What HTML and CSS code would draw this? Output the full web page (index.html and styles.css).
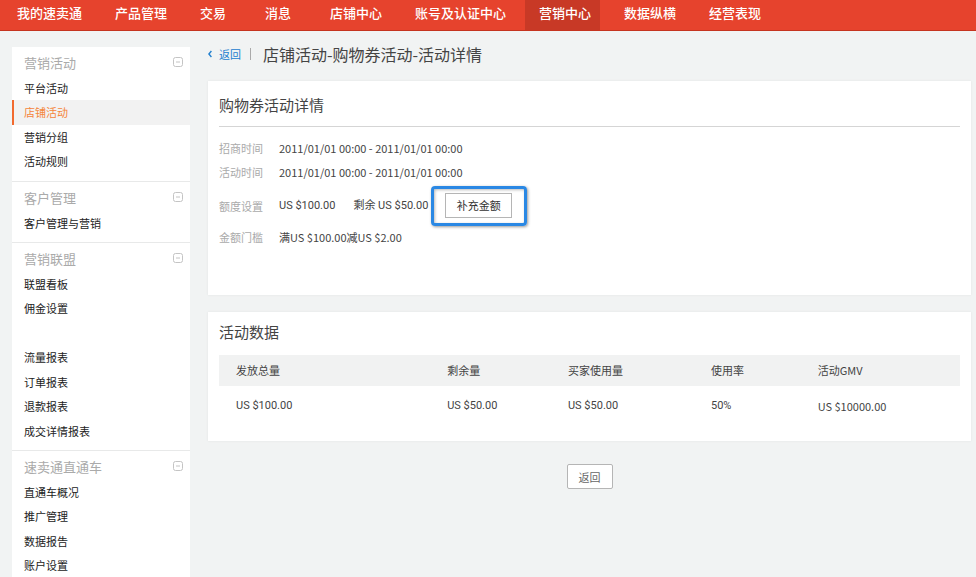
FILE: index.html
```html
<!DOCTYPE html>
<html lang="zh-CN">
<head>
    <meta charset="UTF-8">
    <meta name="viewport" content="width=device-width, initial-scale=1.0">
    <title>店铺活动-购物券活动-活动详情</title>
    <link rel="stylesheet" href="styles.css">
</head>
<body>

    <nav class="top-nav">
        <a href="#">我的速卖通</a>
        <a href="#">产品管理</a>
        <a href="#">交易</a>
        <a href="#">消息</a>
        <a href="#">店铺中心</a>
        <a href="#">账号及认证中心</a>
        <a href="#" class="active">营销中心</a>
        <a href="#">数据纵横</a>
        <a href="#">经营表现</a>
    </nav>

    <div class="page">
        <aside class="sidebar">
            <section class="menu-group">
                <div class="menu-head">
                    <h2>营销活动</h2>
                    <button class="toggle" aria-label="收起"><svg width="10" height="10" viewBox="0 0 10 10"><rect x="0.5" y="0.5" width="9" height="9" rx="2"/><path d="M3 5h4"/></svg></button>
                </div>
                <ul>
                    <li><a href="#">平台活动</a></li>
                    <li class="selected"><a href="#">店铺活动</a></li>
                    <li><a href="#">营销分组</a></li>
                    <li><a href="#">活动规则</a></li>
                </ul>
            </section>
            <section class="menu-group">
                <div class="menu-head">
                    <h2>客户管理</h2>
                    <button class="toggle" aria-label="收起"><svg width="10" height="10" viewBox="0 0 10 10"><rect x="0.5" y="0.5" width="9" height="9" rx="2"/><path d="M3 5h4"/></svg></button>
                </div>
                <ul>
                    <li><a href="#">客户管理与营销</a></li>
                </ul>
            </section>
            <section class="menu-group">
                <div class="menu-head">
                    <h2>营销联盟</h2>
                    <button class="toggle" aria-label="收起"><svg width="10" height="10" viewBox="0 0 10 10"><rect x="0.5" y="0.5" width="9" height="9" rx="2"/><path d="M3 5h4"/></svg></button>
                </div>
                <ul>
                    <li><a href="#">联盟看板</a></li>
                    <li><a href="#">佣金设置</a></li>
                    <li></li>
                    <li><a href="#">流量报表</a></li>
                    <li><a href="#">订单报表</a></li>
                    <li><a href="#">退款报表</a></li>
                    <li><a href="#">成交详情报表</a></li>
                </ul>
            </section>
            <section class="menu-group">
                <div class="menu-head">
                    <h2>速卖通直通车</h2>
                    <button class="toggle" aria-label="收起"><svg width="10" height="10" viewBox="0 0 10 10"><rect x="0.5" y="0.5" width="9" height="9" rx="2"/><path d="M3 5h4"/></svg></button>
                </div>
                <ul>
                    <li><a href="#">直通车概况</a></li>
                    <li><a href="#">推广管理</a></li>
                    <li><a href="#">数据报告</a></li>
                    <li><a href="#">账户设置</a></li>
                </ul>
            </section>
        </aside>

        <main class="content">
            <header class="title-bar">
                <a href="#" class="back-link"><svg width="4" height="8" viewBox="0 0 4 8"><path d="M3.4 1L0.9 4l2.5 3"/></svg>返回</a>
                <span class="divider"></span>
                <h1>店铺活动-购物券活动-活动详情</h1>
            </header>

            <section class="card detail">
                <h2>购物券活动详情</h2>
                <dl>
                    <div class="row">
                        <dt>招商时间</dt>
                        <dd>2011/01/01 00:00 - 2011/01/01 00:00</dd>
                    </div>
                    <div class="row">
                        <dt>活动时间</dt>
                        <dd>2011/01/01 00:00 - 2011/01/01 00:00</dd>
                    </div>
                    <div class="row quota">
                        <dt>额度设置</dt>
                        <dd>
                            <span>US $100.00</span>
                            <span class="remain">剩余 US $50.00</span>
                            <span class="highlight"><button class="btn add-button">补充金额</button></span>
                        </dd>
                    </div>
                    <div class="row">
                        <dt>金额门槛</dt>
                        <dd>满US $100.00减US $2.00</dd>
                    </div>
                </dl>
            </section>

            <section class="card data">
                <h2>活动数据</h2>
                <table>
                    <thead>
                        <tr>
                            <th class="col-total">发放总量</th>
                            <th class="col-left">剩余量</th>
                            <th class="col-used">买家使用量</th>
                            <th class="col-rate">使用率</th>
                            <th>活动GMV</th>
                        </tr>
                    </thead>
                    <tbody>
                        <tr>
                            <td>US $100.00</td>
                            <td>US $50.00</td>
                            <td>US $50.00</td>
                            <td>50%</td>
                            <td class="gmv">US $10000.00</td>
                        </tr>
                    </tbody>
                </table>
            </section>

            <div class="actions">
                <button class="btn return-button">返回</button>
            </div>
        </main>
    </div>

</body>
</html>
```

FILE: styles.css
```css
* {
    box-sizing: border-box;
}
body {
    margin: 0;
    background-color: #f1f3f3;
    color: #444;
    font-family: "Noto Sans CJK SC", sans-serif;
    font-size: 11px;
}
h1, h2, ul, dl, dd {
    margin: 0;
    padding: 0;
    font-weight: normal;
}
a {
    color: inherit;
    text-decoration: none;
}
button {
    padding: 0;
    font-family: inherit;
    cursor: pointer;
}

/* top navigation */
.top-nav {
    display: flex;
    gap: 10px;
    padding-left: 3px;
    background-color: #e6432d;
    border-bottom: 1px solid #c5341f;
}
.top-nav a {
    min-width: 55px;
    padding: 0 9px 4px 14px;
    color: #fff;
    font-size: 13px;
    font-weight: 500;
    line-height: 26px;
    white-space: nowrap;
}
.top-nav .active {
    background-color: #c83926;
}

.page {
    display: flex;
    gap: 18px;
    padding: 0 5px 0 12px;
}

/* sidebar */
.sidebar {
    flex: none;
    width: 178px;
    margin-top: 16px;
    background-color: #fff;
}
.menu-group {
    padding-bottom: 7px;
    border-bottom: 1px solid #e8e9e9;
}
.menu-head {
    display: flex;
    justify-content: space-between;
    align-items: center;
    height: 29px;
    padding: 0 7px 0 12px;
}
.menu-head h2 {
    padding-top: 2px;
    color: #aaa;
    font-size: 13px;
    line-height: 26px;
}
.toggle {
    display: flex;
    border: none;
    background: none;
}
.toggle svg {
    fill: none;
    stroke: #c4c4c4;
}
.sidebar ul {
    list-style: none;
}
.sidebar li {
    height: 24px;
    padding-left: 12px;
    color: #222;
    line-height: 24px;
}
.sidebar li:nth-child(even) {
    height: 25px;
}
.sidebar .selected {
    padding-left: 10px;
    border-left: 2px solid #f26a2e;
    background-color: #f2f2f2;
    color: #f5853b;
}

/* main column */
.content {
    flex: 1;
}
.title-bar {
    display: flex;
    align-items: center;
    height: 50px;
    padding-bottom: 4px;
}
.back-link {
    display: flex;
    align-items: center;
    gap: 7px;
    color: #2380cf;
}
.back-link svg {
    fill: none;
    stroke: #2380cf;
    stroke-width: 1.4;
}
.divider {
    width: 1px;
    height: 12px;
    margin: 0 12px 0 9px;
    background-color: #aaa;
}
h1 {
    font-size: 16px;
    line-height: 24px;
}
.card {
    padding: 0 11px;
    background-color: #fff;
    box-shadow: 0 0 2px #e2e4e4;
}
.card h2 {
    font-size: 15px;
    line-height: 24px;
}
.detail {
    padding-bottom: 46px;
}
.detail h2 {
    padding: 12px 0 9px;
    border-bottom: 1px solid #d5d5d5;
}
.detail dl {
    padding-top: 9px;
}
.row {
    display: flex;
    align-items: center;
    line-height: 24px;
}
.row dt {
    width: 60px;
    color: #aaa;
}
.quota {
    height: 41px;
    padding-top: 2px;
}
.quota dd {
    display: flex;
    align-items: center;
    font-family: Roboto, "Noto Sans CJK SC", sans-serif;
}
.remain {
    margin-left: 18px;
}
.btn {
    border: 1px solid #b5b5b5;
    background-color: #fff;
    color: #333;
    font-family: "Noto Sans CJK SC", sans-serif;
    font-size: 11px;
}
.highlight {
    display: flex;
    margin-left: 3px;
    padding: 4px 12px 5px 11px;
    border: 3px solid #2a88e4;
    border-radius: 4px;
    box-shadow: 1px 1px 3px #999, inset 1px 1px 3px #bbb;
}
.add-button {
    width: 67px;
    height: 25px;
}
.data {
    margin-top: 17px;
    padding-bottom: 16px;
}
.data h2 {
    padding: 8px 0 11px;
}
table {
    width: 100%;
    table-layout: fixed;
    border-collapse: collapse;
}
th, td {
    padding: 0 0 0 17px;
    text-align: left;
}
th {
    height: 31px;
    padding-bottom: 2px;
    background-color: #f1f2f2;
    font-weight: normal;
}
td {
    height: 39px;
    font-family: Roboto, sans-serif;
}
.gmv {
    font-family: "Noto Sans CJK SC", sans-serif;
}
.col-total {
    width: 28.5%;
}
.col-left {
    width: 16.3%;
}
.col-used {
    width: 19.3%;
}
.col-rate {
    width: 14.4%;
}
.actions {
    padding: 23px 0;
    text-align: center;
}
.return-button {
    width: 46px;
    height: 25px;
    border-radius: 2px;
    color: #666;
}
```
